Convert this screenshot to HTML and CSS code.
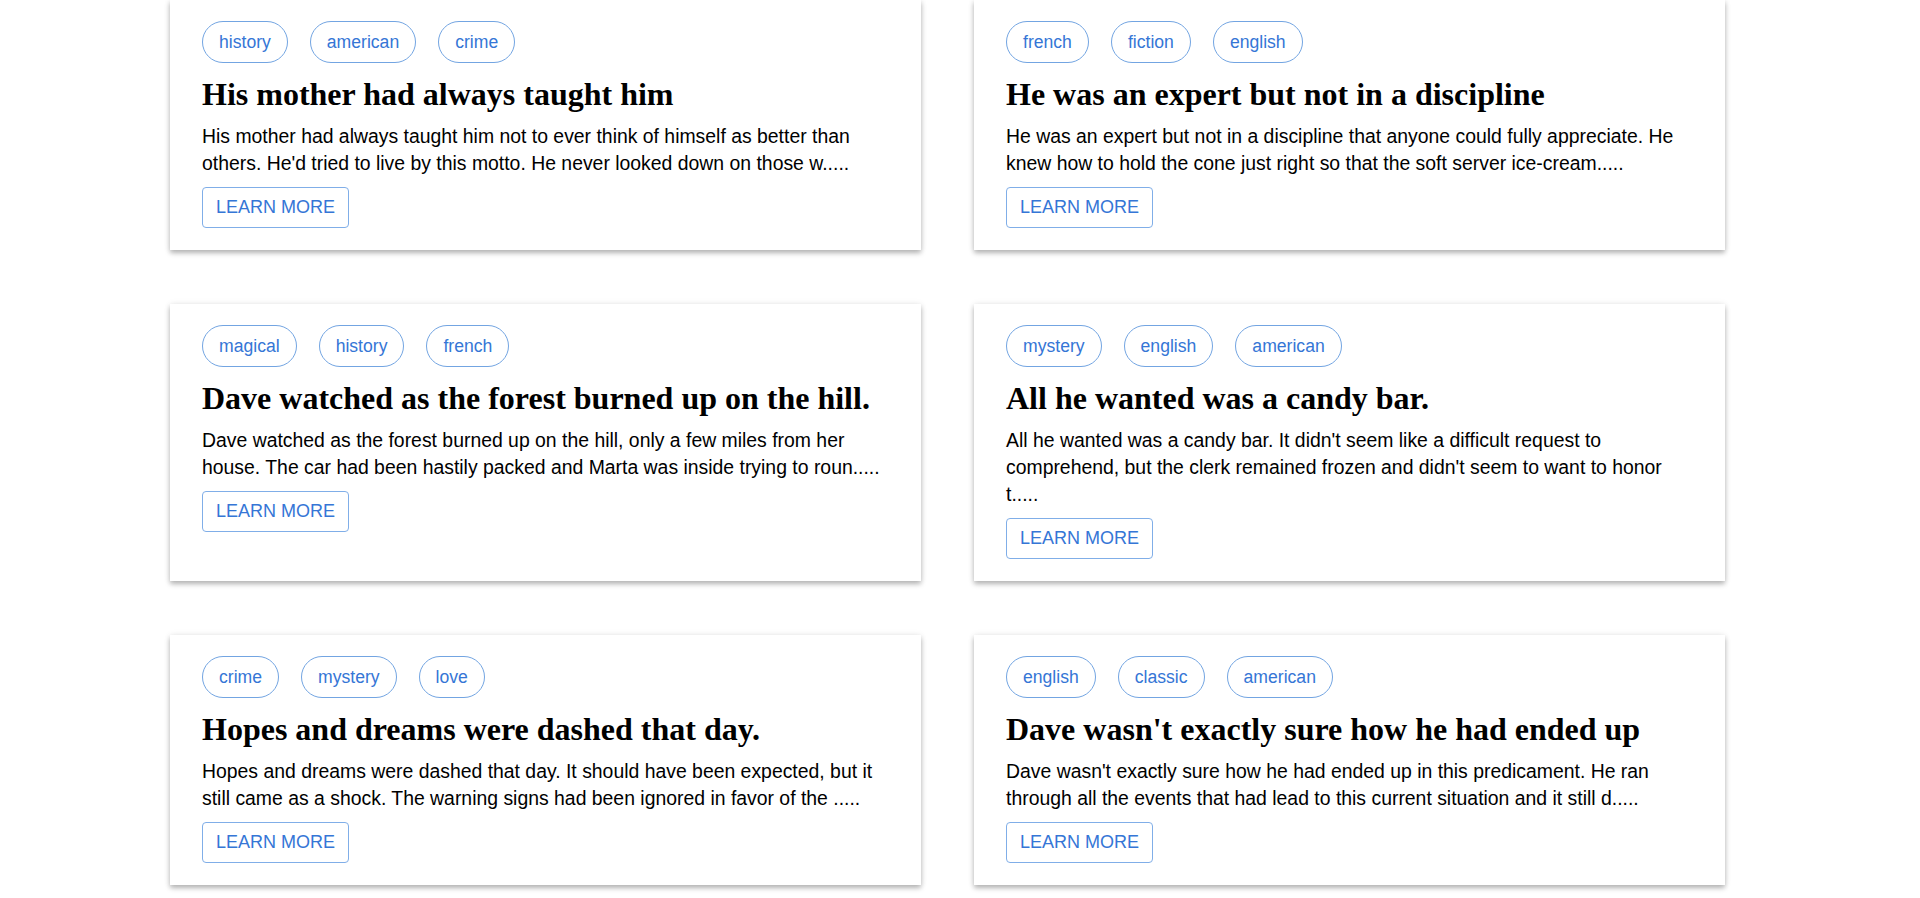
FILE: index.html
```html
<!DOCTYPE html>
<html lang="en">
<head>
<meta charset="utf-8">
<title>Posts</title>
<link rel="stylesheet" href="styles.css">
</head>
<body>
<main class="grid">
  <article class="card">
    <div class="tags"><span class="tag">history</span><span class="tag">american</span><span class="tag">crime</span></div>
    <h2 class="title">His mother had always taught him</h2>
    <p class="body">His mother had always taught him not to ever think of himself as better than others. He'd tried to live by this motto. He never looked down on those w.....</p>
    <button class="more">LEARN MORE</button>
  </article>
  <article class="card">
    <div class="tags"><span class="tag">french</span><span class="tag">fiction</span><span class="tag">english</span></div>
    <h2 class="title">He was an expert but not in a discipline</h2>
    <p class="body">He was an expert but not in a discipline that anyone could fully appreciate. He knew how to hold the cone just right so that the soft server ice-cream.....</p>
    <button class="more">LEARN MORE</button>
  </article>
  <article class="card">
    <div class="tags"><span class="tag">magical</span><span class="tag">history</span><span class="tag">french</span></div>
    <h2 class="title">Dave watched as the forest burned up on the hill.</h2>
    <p class="body">Dave watched as the forest burned up on the hill, only a few miles from her house. The car had been hastily packed and Marta was inside trying to roun.....</p>
    <button class="more">LEARN MORE</button>
  </article>
  <article class="card">
    <div class="tags"><span class="tag">mystery</span><span class="tag">english</span><span class="tag">american</span></div>
    <h2 class="title">All he wanted was a candy bar.</h2>
    <p class="body">All he wanted was a candy bar. It didn't seem like a difficult request to comprehend, but the clerk remained frozen and didn't seem to want to honor t.....</p>
    <button class="more">LEARN MORE</button>
  </article>
  <article class="card">
    <div class="tags"><span class="tag">crime</span><span class="tag">mystery</span><span class="tag">love</span></div>
    <h2 class="title">Hopes and dreams were dashed that day.</h2>
    <p class="body">Hopes and dreams were dashed that day. It should have been expected, but it still came as a shock. The warning signs had been ignored in favor of the .....</p>
    <button class="more">LEARN MORE</button>
  </article>
  <article class="card">
    <div class="tags"><span class="tag">english</span><span class="tag">classic</span><span class="tag">american</span></div>
    <h2 class="title">Dave wasn't exactly sure how he had ended up</h2>
    <p class="body">Dave wasn't exactly sure how he had ended up in this predicament. He ran through all the events that had lead to this current situation and it still d.....</p>
    <button class="more">LEARN MORE</button>
  </article>
  <article class="card">
    <div class="tags"><span class="tag">magical</span><span class="tag">crime</span></div>
    <h2 class="title">This is important to remember.</h2>
    <p class="body">This is important to remember. Love isn't like pie. You don't need to divide it among all your friends and loved ones. No matter how much love you give.....</p>
    <button class="more">LEARN MORE</button>
  </article>
  <article class="card">
    <div class="tags"><span class="tag">english</span><span class="tag">american</span></div>
    <h2 class="title">One can cook on and with an open fire.</h2>
    <p class="body">One can cook on and with an open fire. These are some of the ways to cook with fire outside. Cooking meat using a spit is a great way to evenly cook me.....</p>
    <button class="more">LEARN MORE</button>
  </article>
  <article class="card">
    <div class="tags"><span class="tag">american</span><span class="tag">history</span><span class="tag">magical</span></div>
    <h2 class="title">There are different types of secrets.</h2>
    <p class="body">There are different types of secrets. She had held onto plenty of them during her life, but this one was different. She found herself holding onto the.....</p>
    <button class="more">LEARN MORE</button>
  </article>
  <article class="card">
    <div class="tags"><span class="tag">fiction</span><span class="tag">magical</span><span class="tag">history</span></div>
    <h2 class="title">They rushed out the door.</h2>
    <p class="body">They rushed out the door, grabbing anything and everything they could think of they might need. There was no time to double-check to make sure they we.....</p>
    <button class="more">LEARN MORE</button>
  </article>
  <article class="card">
    <div class="tags"><span class="tag">mystery</span><span class="tag">american</span><span class="tag">history</span></div>
    <h2 class="title">It wasn't quite yet time to panic.</h2>
    <p class="body">It wasn't quite yet time to panic. There was still time to salvage the situation. At least that is what she was telling himself. The reality was that .....</p>
    <button class="more">LEARN MORE</button>
  </article>
  <article class="card">
    <div class="tags"><span class="tag">american</span><span class="tag">french</span><span class="tag">history</span></div>
    <h2 class="title">She was aware that things could go wrong.</h2>
    <p class="body">She was aware that things could go wrong. In fact, she had trained her entire life in anticipation that things would go wrong one day. She had plans in .....</p>
    <button class="more">LEARN MORE</button>
  </article>
  <article class="card">
    <div class="tags"><span class="tag">english</span><span class="tag">crime</span><span class="tag">love</span></div>
    <h2 class="title">She wanted rainbow hair.</h2>
    <p class="body">She wanted rainbow hair. That's what she told the hairdresser. It should be deep rainbow colors, too. She wasn't interested in pastel rainbow hair. She .....</p>
    <button class="more">LEARN MORE</button>
  </article>
  <article class="card">
    <div class="tags"><span class="tag">french</span><span class="tag">classic</span><span class="tag">fiction</span></div>
    <h2 class="title">The paper was blank.</h2>
    <p class="body">The paper was blank. It shouldn't have been. There should have been writing on the paper, at least some sort of writing. If there was writing, she cou.....</p>
    <button class="more">LEARN MORE</button>
  </article>
  <article class="card">
    <div class="tags"><span class="tag">magical</span><span class="tag">english</span><span class="tag">mystery</span></div>
    <h2 class="title">She patiently waited for his number to be called.</h2>
    <p class="body">She patiently waited for his number to be called. She had no desire to be there, but her mom had insisted that she go. She's resisted at first, but tim.....</p>
    <button class="more">LEARN MORE</button>
  </article>
  <article class="card">
    <div class="tags"><span class="tag">love</span><span class="tag">classic</span><span class="tag">american</span></div>
    <h2 class="title">Things aren't going well at all</h2>
    <p class="body">Things aren't going well at all with mom today. She is just a limp noodle and wants to sleep all the time. I sure hope that things get better soon. The .....</p>
    <button class="more">LEARN MORE</button>
  </article>
  <article class="card">
    <div class="tags"><span class="tag">crime</span><span class="tag">history</span><span class="tag">english</span></div>
    <h2 class="title">It was going to rain.</h2>
    <p class="body">It was going to rain. The weather forecast didn't say that, but the steel plate in his hip did. He had learned over the years to trust his hip over the .....</p>
    <button class="more">LEARN MORE</button>
  </article>
  <article class="card">
    <div class="tags"><span class="tag">fiction</span><span class="tag">french</span><span class="tag">magical</span></div>
    <h2 class="title">He couldn't remember exactly where he had read it</h2>
    <p class="body">He couldn't remember exactly where he had read it, but he was sure that he had. The fact that she didn't believe him was quite frustrating as he began t.....</p>
    <button class="more">LEARN MORE</button>
  </article>
  <article class="card">
    <div class="tags"><span class="tag">american</span><span class="tag">mystery</span><span class="tag">classic</span></div>
    <h2 class="title">He wandered down the stairs and into the basement</h2>
    <p class="body">He wandered down the stairs and into the basement. The damp, musty smell of unuse hung in the air. A single, small window let in a glimmer of light, but .....</p>
    <button class="more">LEARN MORE</button>
  </article>
  <article class="card">
    <div class="tags"><span class="tag">history</span><span class="tag">love</span><span class="tag">english</span></div>
    <h2 class="title">She has seen this scene before.</h2>
    <p class="body">She has seen this scene before. It had come to her in dreams many times before. She had to pinch herself to make sure it wasn't a dream again. As her fi.....</p>
    <button class="more">LEARN MORE</button>
  </article>
  <article class="card">
    <div class="tags"><span class="tag">magical</span><span class="tag">fiction</span><span class="tag">crime</span></div>
    <h2 class="title">Sometimes there isn't a good answer.</h2>
    <p class="body">Sometimes there isn't a good answer. No matter how you try to rationalize the outcome, it doesn't make sense. And instead of an answer, you are simply .....</p>
    <button class="more">LEARN MORE</button>
  </article>
  <article class="card">
    <div class="tags"><span class="tag">french</span><span class="tag">american</span><span class="tag">history</span></div>
    <h2 class="title">The rain and wind abruptly stopped.</h2>
    <p class="body">The rain and wind abruptly stopped, but the sky still had the gray swirls of storms in the distance. Dave knew this feeling all too well. The calm befor.....</p>
    <button class="more">LEARN MORE</button>
  </article>
  <article class="card">
    <div class="tags"><span class="tag">english</span><span class="tag">mystery</span><span class="tag">magical</span></div>
    <h2 class="title">There was only one way to do things</h2>
    <p class="body">There was only one way to do things in the Statton house. That one way was to do exactly what the father, Charlie, demanded. He made the decisions and e.....</p>
    <button class="more">LEARN MORE</button>
  </article>
  <article class="card">
    <div class="tags"><span class="tag">classic</span><span class="tag">crime</span><span class="tag">love</span></div>
    <h2 class="title">The robot clicked disapprovingly.</h2>
    <p class="body">The robot clicked disapprovingly, gurgled briefly inside its cubical interior and extruded a pony glass of brownish liquid. "Sir, you will undoubtedly .....</p>
    <button class="more">LEARN MORE</button>
  </article>
  <article class="card">
    <div class="tags"><span class="tag">history</span><span class="tag">fiction</span><span class="tag">french</span></div>
    <h2 class="title">Her mom had warned her.</h2>
    <p class="body">Her mom had warned her. She had been warned time and again, but she had refused to believe her. She had done everything right and she knew she would be .....</p>
    <button class="more">LEARN MORE</button>
  </article>
  <article class="card">
    <div class="tags"><span class="tag">american</span><span class="tag">english</span><span class="tag">classic</span></div>
    <h2 class="title">Mary had to make a decision.</h2>
    <p class="body">Mary had to make a decision and she knew that whatever decision she made, it would upset someone. It seemed like such a silly reason for people to get .....</p>
    <button class="more">LEARN MORE</button>
  </article>
  <article class="card">
    <div class="tags"><span class="tag">mystery</span><span class="tag">love</span><span class="tag">magical</span></div>
    <h2 class="title">The chair sat in the corner where it had been</h2>
    <p class="body">The chair sat in the corner where it had been for over 25 years. The only difference was there was someone actually sitting in it. How long had it been .....</p>
    <button class="more">LEARN MORE</button>
  </article>
  <article class="card">
    <div class="tags"><span class="tag">crime</span><span class="tag">french</span><span class="tag">fiction</span></div>
    <h2 class="title">Josh had spent year and year accumulating</h2>
    <p class="body">Josh had spent year and year accumulating the information. He knew it inside out and if there was ever anyone looking for an expert in the field, Josh .....</p>
    <button class="more">LEARN MORE</button>
  </article>
  <article class="card">
    <div class="tags"><span class="tag">english</span><span class="tag">history</span><span class="tag">american</span></div>
    <h2 class="title">It was the best compliment that he'd ever received</h2>
    <p class="body">It was the best compliment that he'd ever received although the person who gave it likely never knew just how much it meant to him. In that moment, it .....</p>
    <button class="more">LEARN MORE</button>
  </article>
  <article class="card">
    <div class="tags"><span class="tag">classic</span><span class="tag">magical</span><span class="tag">mystery</span></div>
    <h2 class="title">Nobody really understood Kevin.</h2>
    <p class="body">Nobody really understood Kevin. It wasn't that he was super strange or difficult. It was more that there wasn't enough there that anyone wanted to take .....</p>
    <button class="more">LEARN MORE</button>
  </article>
</main>
</body>
</html>
```
FILE: styles.css
```css
html, body {
  margin: 0;
  padding: 0;
  background: #ffffff;
}

body {
  font-family: "Liberation Sans", Arial, sans-serif;
  color: #000;
}

::-webkit-scrollbar {
  width: 25px;
  background: #f1f1f1;
}

::-webkit-scrollbar-track {
  background: #f1f1f1;
}

::-webkit-scrollbar-thumb {
  background: #c1c1c1;
  border-left: 2px solid #f1f1f1;
  border-right: 2px solid #f1f1f1;
}

::-webkit-scrollbar-button:single-button {
  display: block;
  height: 22px;
  background-color: #f1f1f1;
  background-repeat: no-repeat;
  background-size: 6px 6px;
}

::-webkit-scrollbar-button:single-button:vertical:decrement {
  background-image:
    linear-gradient(to bottom right, transparent 50%, #a3a3a3 50%),
    linear-gradient(to bottom left, transparent 50%, #a3a3a3 50%);
  background-position: 7px 8px, 13px 8px;
}

::-webkit-scrollbar-button:single-button:vertical:increment {
  background-image:
    linear-gradient(to top right, transparent 50%, #505050 50%),
    linear-gradient(to top left, transparent 50%, #505050 50%);
  background-position: 7px 9px, 13px 9px;
}

.grid {
  display: grid;
  grid-template-columns: 751px 751px;
  column-gap: 53px;
  row-gap: 54px;
  padding: 0 0 60px 170px;
}

.card {
  background: #fff;
  padding: 21px 32px 22px;
  box-shadow: 0 3px 5px rgba(0, 0, 0, 0.28), 0 0 7px rgba(0, 0, 0, 0.07);
}

.tags {
  display: flex;
  gap: 22px;
  margin-bottom: 13px;
}

.tag {
  display: inline-block;
  font-size: 17.6px;
  line-height: 20px;
  padding: 10px 16px;
  border: 1px solid #73a5e2;
  border-radius: 21px;
  color: #3576d6;
}

.title {
  font-family: "Liberation Serif", "Times New Roman", serif;
  font-weight: bold;
  font-size: 32px;
  line-height: 37px;
  margin: 0 0 10px;
  color: #000;
}

.body {
  font-size: 19.4px;
  line-height: 27px;
  margin: 0 0 10px;
}

.more {
  display: inline-block;
  font-family: "Liberation Sans", Arial, sans-serif;
  font-size: 18px;
  line-height: 21px;
  padding: 9px 13px;
  background: #fff;
  border: 1px solid #80aee8;
  border-radius: 4px;
  color: #3576d6;
  cursor: pointer;
}
```
